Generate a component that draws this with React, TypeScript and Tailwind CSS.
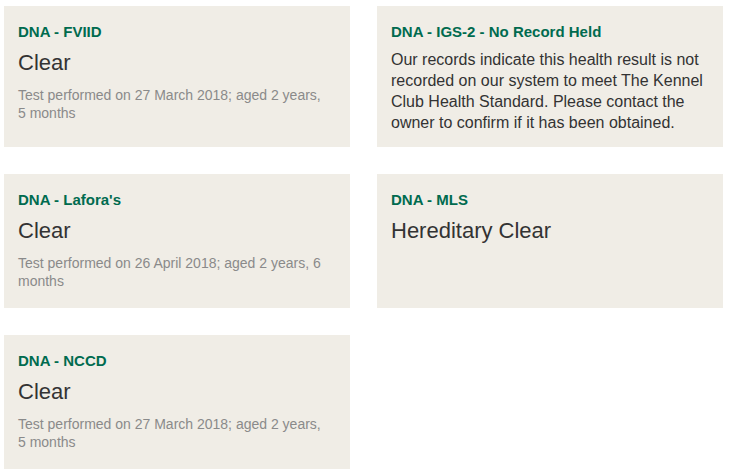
type Result = {
  title: string;
  result?: string;
  detail?: string;
  note?: string;
};

const results: Result[] = [
  {
    title: 'DNA - FVIID',
    result: 'Clear',
    detail: 'Test performed on 27 March 2018; aged 2 years, 5 months',
  },
  {
    title: 'DNA - IGS-2 - No Record Held',
    note: 'Our records indicate this health result is not recorded on our system to meet The Kennel Club Health Standard. Please contact the owner to confirm if it has been obtained.',
  },
  {
    title: "DNA - Lafora's",
    result: 'Clear',
    detail: 'Test performed on 26 April 2018; aged 2 years, 6 months',
  },
  {
    title: 'DNA - MLS',
    result: 'Hereditary Clear',
  },
  {
    title: 'DNA - NCCD',
    result: 'Clear',
    detail: 'Test performed on 27 March 2018; aged 2 years, 5 months',
  },
];

function ResultCard({ item }: { item: Result }) {
  return (
    <div className={`bg-[#f0ede6] pt-4 px-[14px] ${item.note ? 'pb-[14px]' : 'pb-[18px]'}`}>
      <h3 className="text-[15px] leading-5 font-bold text-[#006b4f]">{item.title}</h3>
      {item.note && (
        <p className="mt-[7px] text-[16px] leading-[21px] text-[#333333]">{item.note}</p>
      )}
      {item.result && (
        <p className="mt-[7px] text-[22px] leading-7 text-[#333333]">{item.result}</p>
      )}
      {item.detail && (
        <p className="mt-[9px] pr-[6px] text-[14px] leading-[18px] text-[#8a8a8a]">{item.detail}</p>
      )}
    </div>
  );
}

export default function App() {
  return (
    <div
      className="bg-white w-[729px] h-[469px] overflow-hidden pt-[6px] pl-1"
      style={{ fontFamily: '"Liberation Sans", Arial, sans-serif' }}
    >
      <div className="grid grid-cols-[346px_346px] gap-[27px]">
        {results.map((item) => (
          <ResultCard key={item.title} item={item} />
        ))}
      </div>
    </div>
  );
}
